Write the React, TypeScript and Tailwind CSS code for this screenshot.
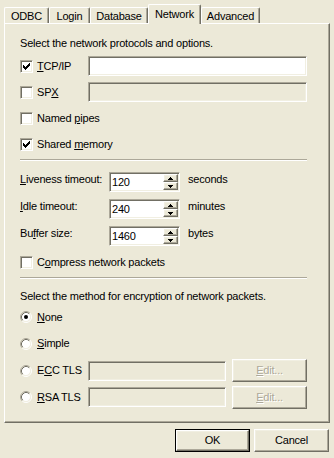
import React from 'react';

const sunken =
  'border border-t-[#ACA899] border-l-[#ACA899] border-r-white border-b-white shadow-[inset_1px_1px_0_#716F64,inset_-1px_-1px_0_#F1EFE2]';
const raised =
  'border border-t-white border-l-white border-r-[#716F64] border-b-[#716F64] shadow-[inset_-1px_-1px_0_#ACA899,inset_1px_1px_0_#F1EFE2]';

function U({ children }: { children: React.ReactNode }) {
  return <span className="underline decoration-1 underline-offset-[1px]">{children}</span>;
}

const checkCols = [2, 3, 4, 3, 2, 1, 0];

function CheckBox({ checked }: { checked?: boolean }) {
  return (
    <span className={`block w-[13px] h-[13px] shrink-0 bg-white ${sunken}`}>
      {checked && (
        <svg width="11" height="11" className="block" shapeRendering="crispEdges">
          {checkCols.map((y, i) => (
            <rect key={i} x={2 + i} y={2 + y} width="1" height="3" fill="#000" />
          ))}
        </svg>
      )}
    </span>
  );
}

function Radio({ checked }: { checked?: boolean }) {
  return (
    <svg width="12" height="12" className="block shrink-0">
      <circle cx="6" cy="6" r="4.5" fill="#fff" />
      <path d="M2.11 9.89 A5.5 5.5 0 0 1 9.89 2.11" fill="none" stroke="#ACA899" />
      <path d="M9.89 2.11 A5.5 5.5 0 0 1 2.11 9.89" fill="none" stroke="#fff" />
      <path d="M2.82 9.18 A4.5 4.5 0 0 1 9.18 2.82" fill="none" stroke="#716F64" />
      <path d="M9.18 2.82 A4.5 4.5 0 0 1 2.82 9.18" fill="none" stroke="#F1EFE2" />
      {checked && <circle cx="6" cy="6" r="2" fill="#000" />}
    </svg>
  );
}

function Field({ width, disabled }: { width: string; disabled?: boolean }) {
  return (
    <div className={`${width} h-[20px] ${disabled ? 'bg-[#ECE9D8]' : 'bg-white'} ${sunken}`} />
  );
}

function Separator() {
  return <div className="w-[287px] h-[2px] border-t border-t-[#ACA899] border-b border-b-white" />;
}

function SpinButton({ up }: { up?: boolean }) {
  return (
    <div className={`h-[8px] w-[15px] bg-[#ECE9D8] flex items-center justify-center ${raised}`}>
      <svg width="5" height="3" className="block" shapeRendering="crispEdges">
        {up ? <path d="M2 0h1v1h1v1h1v1H0V2h1V1h1z" fill="#000" /> : <path d="M0 0h5v1H4v1H3v1H2V2H1V1H0z" fill="#000" />}
      </svg>
    </div>
  );
}

function Spinner({ value }: { value: string }) {
  return (
    <div className={`w-[71px] h-[20px] bg-white flex items-center ${sunken}`}>
      <span className="flex-1 pl-[2px] pt-[1px] leading-[13px]">{value}</span>
      <div className="flex flex-col mr-px">
        <SpinButton up />
        <SpinButton />
      </div>
    </div>
  );
}

function Button({ children, disabled, isDefault }: { children: React.ReactNode; disabled?: boolean; isDefault?: boolean }) {
  const inner = (
    <div
      className={`h-full w-full flex items-center justify-center ${raised} ${
        disabled ? 'text-[#ACA899] [text-shadow:1px_1px_0_#fff]' : ''
      }`}
    >
      {children}
    </div>
  );
  return isDefault ? (
    <div className="w-[75px] h-[23px] border border-black">{inner}</div>
  ) : (
    <div className="w-[75px] h-[23px]">{inner}</div>
  );
}

const tabs = [
  { name: 'ODBC', w: 'w-[45px]' },
  { name: 'Login', w: 'w-[41px]' },
  { name: 'Database', w: 'w-[58px]' },
  { name: 'Network', w: 'w-[53px]', active: true },
  { name: 'Advanced', w: 'w-[59px]' },
];

export default function App() {
  return (
    <div className="w-[334px] h-[458px] bg-[#ECE9D8] px-[4px] pt-[4px] text-[11px] leading-[13px] tracking-[-0.2px] text-black font-['Liberation_Sans',Arial,sans-serif] overflow-hidden">
      <div className="flex items-end h-[19px]">
        {tabs.map((t) =>
          t.active ? (
            <div
              key={t.name}
              className={`${t.w} h-[20px] -mb-px relative z-10 bg-[#ECE9D8] rounded-t-[2px] border-l border-t border-l-white border-t-white border-r border-r-[#716F64] shadow-[inset_-1px_0_0_#ACA899] flex justify-center pt-[3px]`}
            >
              {t.name}
            </div>
          ) : (
            <div
              key={t.name}
              className={`${t.w} h-[16px] rounded-t-[2px] border-l border-t border-l-white border-t-white border-r border-r-[#716F64] shadow-[inset_-1px_0_0_#ACA899] flex justify-center pt-[2px]`}
            >
              {t.name}
            </div>
          )
        )}
      </div>

      <div className="h-[400px] border border-t-white border-l-white border-r-[#716F64] border-b-[#716F64] shadow-[inset_-1px_-1px_0_#ACA899] pl-[15px] pt-[9px]">
        <div className="h-[20px] flex items-center">Select the network protocols and options.</div>

        <div className="h-[26px] flex items-center">
          <div className="w-[68px] flex items-center">
            <CheckBox checked />
            <span className="ml-[4px]">
              <U>T</U>CP/IP
            </span>
          </div>
          <Field width="w-[219px]" />
        </div>
        <div className="h-[26px] flex items-center">
          <div className="w-[68px] flex items-center">
            <CheckBox />
            <span className="ml-[4px]">
              SP<U>X</U>
            </span>
          </div>
          <Field width="w-[219px]" disabled />
        </div>
        <div className="h-[26px] flex items-center">
          <CheckBox />
          <span className="ml-[4px]">
            Named <U>p</U>ipes
          </span>
        </div>
        <div className="h-[26px] flex items-center">
          <CheckBox checked />
          <span className="ml-[4px]">
            Shared <U>m</U>emory
          </span>
        </div>

        <div className="mt-[2px]">
          <Separator />
        </div>

        <div className="mt-[11px]">
          {[
            { label: <><U>L</U>iveness timeout:</>, value: '120', unit: 'seconds' },
            { label: <><U>I</U>dle timeout:</>, value: '240', unit: 'minutes' },
            { label: <>Bu<U>f</U>fer size:</>, value: '1460', unit: 'bytes' },
          ].map((r) => (
            <div key={r.value} className="h-[27px] flex items-start">
              <span className="w-[89px] pt-px">{r.label}</span>
              <Spinner value={r.value} />
              <span className="ml-[8px] pt-px">{r.unit}</span>
            </div>
          ))}
        </div>

        <div className="h-[26px] -mt-[4px] flex items-center">
          <CheckBox />
          <span className="ml-[4px]">
            C<U>o</U>mpress network packets
          </span>
        </div>

        <div className="mt-[2px]">
          <Separator />
        </div>

        <div className="mt-[9px] h-[16px] flex items-center">Select the method for encryption of network packets.</div>

        <div className="h-[26px] flex items-center">
          <Radio checked />
          <span className="ml-[5px]">
            <U>N</U>one
          </span>
        </div>
        <div className="h-[27px] flex items-center">
          <Radio />
          <span className="ml-[5px]">
            <U>S</U>imple
          </span>
        </div>
        <div className="h-[27px] flex items-center">
          <div className="w-[68px] flex items-center">
            <Radio />
            <span className="ml-[5px]">
              E<U>C</U>C TLS
            </span>
          </div>
          <Field width="w-[138px]" disabled />
          <div className="ml-[6px]">
            <Button disabled>
              <span>
                <U>E</U>dit...
              </span>
            </Button>
          </div>
        </div>
        <div className="h-[26px] flex items-center">
          <div className="w-[68px] flex items-center">
            <Radio />
            <span className="ml-[5px]">
              <U>R</U>SA TLS
            </span>
          </div>
          <Field width="w-[138px]" disabled />
          <div className="ml-[6px]">
            <Button disabled>
              <span>
                <U>E</U>dit...
              </span>
            </Button>
          </div>
        </div>
      </div>

      <div className="mt-[6px] flex justify-end gap-[4px] pr-[1px]">
        <Button isDefault>OK</Button>
        <Button>Cancel</Button>
      </div>
    </div>
  );
}
